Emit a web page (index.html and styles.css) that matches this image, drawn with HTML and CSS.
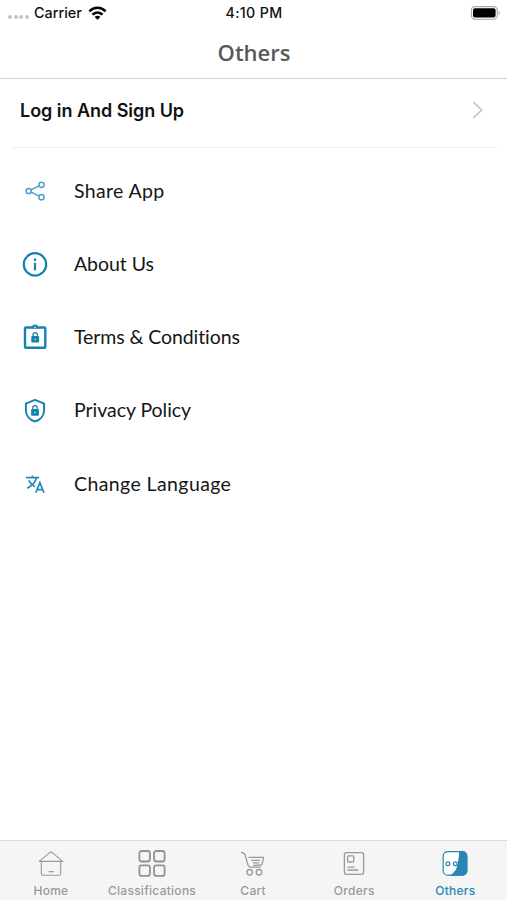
FILE: index.html
```html
<!DOCTYPE html>
<html lang="en">
<head>
<meta charset="utf-8">
<title>Others</title>
<link rel="stylesheet" href="styles.css">
</head>
<body>
<div class="app">
  <div class="status">
    <div class="carrier">
      <span class="dots"><i></i><i></i><i></i><i></i></span>
      <span class="carrier-name">Carrier</span>
      <svg class="wifi" width="19" height="14" viewBox="0 0 18 14" fill="none" stroke="#000" stroke-width="2.6"><path d="M.9 5.3C5.5.5 12.5.5 17.1 5.3"/><path d="M4 8.7c2.9-3 7.1-3 10 0"/><path d="M9 13.8 6.1 10.9c1.7-1.5 4.1-1.5 5.8 0z" fill="#000" stroke="none"/></svg>
    </div>
    <span class="time">4:10 PM</span>
    <svg class="battery" width="30" height="14" viewBox="0 0 30 14"><rect x="1.4" y=".6" width="25.8" height="12.6" rx="3.6" fill="none" stroke="#a8a8a8" stroke-width="1.1"/><rect x="3" y="2.2" width="22.6" height="9.4" rx="2" fill="#000"/><path d="M28.6 4.7v4.4c1.6-.8 1.6-3.6 0-4.4z" fill="#a8a8a8"/></svg>
  </div>
  <header class="title"><h1>Others</h1></header>
  <main>
    <a class="login"><span>Log in And Sign Up</span>
      <svg width="12" height="18" viewBox="0 0 12 18" fill="none" stroke="#c3c3c5" stroke-width="1.6"><path d="M1.5 1.2 9.7 9l-8.2 7.8"/></svg>
    </a>
    <nav class="menu">
      <a class="item"><svg width="26" height="26" viewBox="0 0 26 26" fill="none" stroke="#4a9fc6" stroke-width="1.5"><circle cx="6.7" cy="13" r="2.6"/><circle cx="19.5" cy="6.8" r="2.6"/><circle cx="19.5" cy="19.2" r="2.6"/><path d="m9.1 11.8 8-3.9m-8 6.3 8 3.9"/></svg><span class="share">Share App</span></a>
      <a class="item"><svg width="26" height="26" viewBox="0 0 26 26" fill="none" stroke="#1681b1" stroke-width="2.2"><circle cx="13" cy="13.4" r="11.2"/><path d="M13 11.8v7.5M13 7.5v2.4"/></svg><span class="about">About Us</span></a>
      <a class="item"><svg width="26" height="26" viewBox="0 0 26 26" fill="none" stroke="#1681b1" stroke-width="2.4" stroke-linejoin="round"><rect x="3" y="3.5" width="20.3" height="20.3" rx="1"/><path d="M9 3.6h1.6C10.7.3 15.5.3 15.6 3.6H17z" fill="#1681b1" stroke-width="1.2"/><circle cx="13.1" cy="3.2" r=".8" fill="#fff" stroke="none"/><rect x="9.3" y="12" width="7.8" height="6.5" rx=".8" fill="#1681b1" stroke="none"/><path d="M11 12.2v-1.3a2.2 2.2 0 0 1 4.4 0v1.3" stroke-width="1.2"/><circle cx="13.2" cy="15.2" r=".7" fill="#fff" stroke="none"/></svg><span class="terms">Terms &amp; Conditions</span></a>
      <a class="item"><svg width="26" height="26" viewBox="0 0 26 26" fill="none" stroke="#1681b1" stroke-width="2" stroke-linejoin="round"><path d="m13 1.9 9.1 3.8v6.6c0 5.4-3.8 9.6-9.1 11.2-5.3-1.6-9.1-5.8-9.1-11.2V5.7z"/><rect x="9.1" y="11.1" width="7.8" height="6.7" rx=".8" fill="#1681b1" stroke="none"/><path d="M10.8 11.3V9.8a2.2 2.2 0 0 1 4.4 0v1.5" stroke-width="1.2"/><circle cx="13" cy="14.4" r=".7" fill="#fff" stroke="none"/></svg><span class="privacy">Privacy Policy</span></a>
      <a class="item"><svg width="26" height="26" viewBox="0 0 26 26" fill="none" stroke="#2589b6" stroke-width="1.7"><path d="M4 6.6h13M10.4 4.5v2.1M14.4 6.8C13.6 11 9.8 14.7 5.2 17.2M6.8 9.3c1.2 2.7 3.4 4.8 6 6.4"/><path d="m13.8 21.8 4.1-10.2L22 21.8m-6.8-3.2h5.4"/></svg><span class="language">Change Language</span></a>
    </nav>
  </main>
  <footer class="tabs">
    <a class="tab"><svg width="28" height="28" viewBox="0 0 28 28" fill="none" stroke="#999" stroke-width="1.1" stroke-linejoin="round"><path d="M2.2 11.4 14 1.7l11.8 9.7z"/><path d="M4.3 11.5v12.2c0 1 .6 1.5 1.5 1.5h16.4c1 0 1.5-.6 1.5-1.5V11.5M11.7 21.6h4.8"/></svg><span>Home</span></a>
    <a class="tab"><svg width="28" height="28" viewBox="0 0 28 28" fill="none" stroke="#929292" stroke-width="1.8"><rect x="1.4" y="1" width="10.5" height="10.5" rx="2.2"/><rect x="16.1" y="1" width="10.5" height="10.5" rx="2.2"/><rect x="1.4" y="15.4" width="10.5" height="10.5" rx="2.2"/><rect x="16.1" y="15.4" width="10.5" height="10.5" rx="2.2"/></svg><span>Classifications</span></a>
    <a class="tab"><svg width="28" height="28" viewBox="0 0 28 28" fill="none" stroke="#999" stroke-width="1.3" stroke-linejoin="round"><path d="M2 2.3c2 .2 3.6.6 4.1 2.5L9 15.2c.4 1.4 1 1.9 2.3 1.9H22M9.5 7.4h15c-.5 4-.9 6.1-1.9 7.1-1 .8-4 .8-8.2.8M12.2 10.4h9M14 12.8h6"/><circle cx="10.7" cy="22.3" r="2.8"/><circle cx="20" cy="22.3" r="2.8"/></svg><span>Cart</span></a>
    <a class="tab"><svg width="28" height="28" viewBox="0 0 28 28" fill="none" stroke="#999" stroke-width="1.3"><rect x="4.4" y="2.7" width="19.2" height="21.6" rx="2"/><rect x="7.6" y="5.8" width="6.2" height="6.2" rx="1"/><path d="M7.4 17.1h7.2M7.4 20h10.8"/></svg><span>Orders</span></a>
    <a class="tab active"><svg width="28" height="28" viewBox="0 0 28 28" fill="none" stroke="#2787b2" stroke-width="1.2"><rect x="2.2" y="1.6" width="23.6" height="23.6" rx="4.5" fill="#fff"/><path d="M18.6 1.6h2.7a4.5 4.5 0 0 1 4.5 4.5v14.6a4.5 4.5 0 0 1-4.5 4.5H10.5c4.2-3 5.9-6.1 6.3-9.8.8-4.4 2.4-8.6 1.8-13.8z" fill="#2787b2"/><circle cx="6.9" cy="13.8" r="1.9"/><circle cx="14.3" cy="13.8" r="1.9" fill="#fff"/></svg><span>Others</span></a>
  </footer>
</div>
</body>
</html>
```
FILE: styles.css
```css
* { box-sizing: border-box; }
body { margin: 0; background: #fff; font-family: Inter, sans-serif; color: #161616; }
.app { height: 900px; display: flex; flex-direction: column; }
.status { height: 27px; display: grid; grid-template-columns: 1fr auto 1fr; align-items: center; padding: 0 7px 2px 8px; color: #111; font-size: 14.4px; font-weight: 500; }
.carrier { display: flex; align-items: center; }
.dots { display: flex; gap: 1.5px; width: 26px; padding-top: 8px; }
.dots i { width: 4px; height: 4px; border-radius: 50%; background: #c5c5c5; }
.carrier-name { width: 54px; white-space: nowrap; }
.time { font-size: 14.2px; letter-spacing: .35px; }
.battery { justify-self: end; }
.title { height: 52px; padding-bottom: 2px; border-bottom: 1px solid #d2d2d2; display: flex; justify-content: center; align-items: center; }
h1 { margin: 0; padding-left: 1px; font: 600 22px/30px "Open Sans", sans-serif; color: #595959; }
main { flex: 1; }
.login { height: 69px; margin: 0 10px 0 12px; padding: 0 13px 6px 8px; border-bottom: 1px solid #efefef; display: flex; justify-content: space-between; align-items: center; font-size: 18px; font-weight: 600; letter-spacing: -.04px; color: #111; }
.menu { padding-top: 6px; }
.item { height: 73.3px; padding-left: 22px; display: flex; align-items: center; gap: 26px; font: 19.5px/26px Lato, sans-serif; font-variant-ligatures: none; }
.share { letter-spacing: .35px; }
.about { letter-spacing: -.05px; }
.terms { letter-spacing: -.08px; }
.privacy { letter-spacing: -.04px; margin-top: -1px; }
.language { letter-spacing: .4px; }
.tabs { height: 60px; background: #f6f5f6; border-top: 1px solid #d9d9d9; display: grid; grid-template-columns: repeat(5, 101.1px); padding-left: .4px; }
.tab { display: flex; flex-direction: column; align-items: center; padding-top: 9px; color: #999; font-size: 12px; line-height: 16px; font-weight: 500; letter-spacing: .27px; }
.tab span { margin-top: 5px; }
.active { color: #2787b2; }
```
